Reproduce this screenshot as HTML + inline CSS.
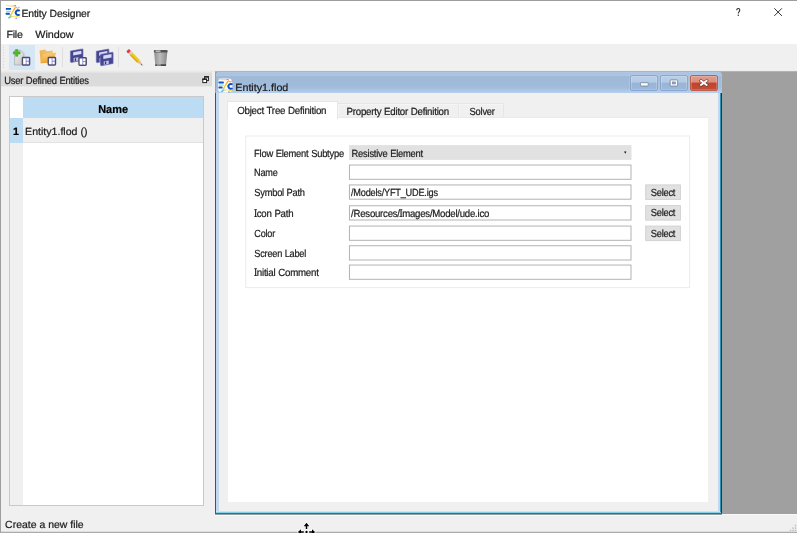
<!DOCTYPE html>
<html>
<head>
<meta charset="utf-8">
<title>Entity Designer</title>
<style>
html,body{margin:0;padding:0;}
body{width:797px;height:533px;overflow:hidden;background:#f0f0f0;font-family:"Liberation Sans",sans-serif;font-size:11px;color:#1c1c1c;position:relative;}
#win{position:absolute;left:0;top:0;width:797px;height:533px;background:#f0f0f0;overflow:hidden;will-change:transform;}
#win div,#win svg{position:absolute;box-sizing:border-box;}
.t{position:absolute;white-space:nowrap;line-height:1;transform-origin:0 0;text-rendering:geometricPrecision;-webkit-text-stroke:0.22px currentColor;}
#titlebar{left:1px;top:1px;width:796px;height:43px;background:#fff;}
#bt{left:0;top:0;width:797px;height:1px;background:#9e9e9e;}
#bl{left:0;top:0;width:1px;height:533px;background:#9e9e9e;}
#bb{left:0;top:532px;width:797px;height:1px;background:#ababab;}
#bb2{left:0;top:531px;width:797px;height:1px;background:#dedede;}
#tb{left:1px;top:44px;width:796px;height:26px;background:#f0f0f0;}
#tbhover{left:9px;top:45px;width:26px;height:25px;background:#d5e6f5;}
#tbline{left:1px;top:70px;width:796px;height:2px;background:linear-gradient(#eeeeee 0,#eeeeee 1px,#e9e9e9 1px);}
.sep{width:1px;top:47px;height:20px;background:#dfdfdf;}
#dockhead{left:1px;top:72px;width:211px;height:15px;background:linear-gradient(#e3e3e3 0,#e3e3e3 1px,#dbdbdb 1px,#dbdbdb 14px,#e7e7e7 14px);}
#table{left:9px;top:96px;width:195px;height:410px;background:#fff;border:1px solid #c9c9c9;}
#thcorner{left:10px;top:97px;width:12.5px;height:21px;background:#fff;}
#thname{left:22.5px;top:97px;width:180.5px;height:21px;background:#bbdcf3;}
#vhead{left:10px;top:118px;width:12.5px;height:387px;background:#f0f0f0;}
#vh1{left:10px;top:118px;width:12.5px;height:25px;background:#bbdcf3;}
#row1{left:22.5px;top:118px;width:180.5px;height:25px;background:#f0f0f0;border-bottom:1px solid #e2e2e2;}
#mdi{left:215px;top:71px;width:582px;height:443px;background:#a0a0a0;border-top:1px solid #b6b2b0;}
#mdiw{left:214px;top:514px;width:583px;height:1px;background:#f8f8f8;}
#sub{left:215px;top:93px;width:507px;height:421px;background:#f0f0f0;}
#subtitle{left:215.5px;top:72px;width:505px;height:21px;border-radius:2.5px 2.5px 0 0;box-shadow:0.6px 0 0 #b9e0f2;background:linear-gradient(#b3c9e4 0,#a9c3e1 1px,#a9c3e1 2.8px,#b2cae7 3.3px,#9fb9d8 4.2px,#a1bbda 15px,#b6cfed 21px);}
#fl1{left:215px;top:93px;width:1px;height:421px;background:#505050;}
#fl2{left:216px;top:93px;width:3px;height:419px;background:#c3d7ef;}
#fr1{left:718px;top:93px;width:2px;height:419px;background:#c3d7ef;}
#fr2{left:720px;top:93px;width:1px;height:421px;background:#2e93b4;}
#fr3{left:721px;top:93px;width:1px;height:421px;background:#303030;}
#fb1{left:216px;top:511px;width:504px;height:1px;background:#d6e2f0;}
#fb2{left:216px;top:512px;width:505px;height:1px;background:#80d0ee;}
#fb3{left:215px;top:513px;width:507px;height:1px;background:#1f7b8b;}
#fb4{left:215px;top:514px;width:507px;height:1px;background:#949c9e;}
#fb5{left:215px;top:515px;width:507px;height:1px;background:#fafafa;}
.wb{top:75px;width:28px;height:16px;border-radius:2px;border:1px solid #8aa6cc;box-shadow:inset 0 0 0 0.6px rgba(255,255,255,0.35),0 0 0 0.5px rgba(190,210,235,0.8);background:linear-gradient(#b8cee8 0,#b4cbe6 44%,#98b4d6 50%,#9cb8da 100%);}
#wb3{border-color:#b9604e;background:linear-gradient(#e19b8d 0,#dc8c7c 44%,#bf432b 50%,#c54d35 100%);}
#pane{left:227px;top:117px;width:482px;height:385.5px;background:#fff;border:1px solid #f0f0f0;border-top-color:#eaeaea;}
#tab1{left:227px;top:101px;width:111px;height:18px;background:#fff;border:1px solid #e6e6e6;border-bottom:none;}
#tab2{left:338px;top:103px;width:121px;height:14px;background:#f0f0f0;border:1px solid #e6e6e6;border-bottom:none;border-left:none;box-shadow:inset 1px 1px 0 #f5f5f5;}
#tab3{left:459px;top:103px;width:44.5px;height:14px;background:#f0f0f0;border:1px solid #e6e6e6;border-bottom:none;border-left:none;box-shadow:inset 1px 1px 0 #f5f5f5;}
#gbox{left:245.5px;top:135.5px;width:444.5px;height:152.5px;border:1px solid #ececec;}
#combo{left:349px;top:145px;width:282.5px;height:15px;background:#e1e1e1;}
.inp{left:349px;width:282.5px;height:15px;background:#fff;border:1px solid #adadad;}
.btn{left:645px;width:36px;height:15.5px;background:#e1e1e1;border:1px solid #d3d3d3;}
</style>
</head>
<body>
<div id="win">
  <div id="titlebar"></div>
  <div id="tb"></div>
  <div id="tbhover"></div>
  <div id="tbline"></div>
  <div class="sep" style="left:62px"></div>
  <div class="sep" style="left:118px"></div>
  <div id="dockhead"></div>
  <div id="table"></div>
  <div id="thcorner"></div>
  <div id="thname"></div>
  <div id="vhead"></div>
  <div id="vh1"></div>
  <div id="row1"></div>
  <div id="mdi"></div>
  <div id="mdiw"></div>
  <div id="sub"></div>
  <div id="subtitle"></div>
  <div id="fl1"></div><div id="fl2"></div>
  <div id="fr1"></div><div id="fr2"></div><div id="fr3"></div>
  <div id="fb1"></div><div id="fb2"></div><div id="fb3"></div><div id="fb4"></div><div id="fb5"></div>
  <div class="wb" id="wb1" style="left:630px"></div>
  <div class="wb" id="wb2" style="left:660px"></div>
  <div class="wb" id="wb3" style="left:690px"></div>
  <div id="pane"></div>
  <div id="tab2"></div>
  <div id="tab3"></div>
  <div id="tab1"></div>
<svg id="form" width="797" height="533" viewBox="0 0 797 533" style="left:0;top:0">
<rect x="245.8" y="136" width="443.8" height="151.6" fill="none" stroke="#ececec" stroke-width="1"/>
<rect x="349.1" y="145.1" width="282.4" height="14.8" fill="#e1e1e1"/>
<rect x="349.45" y="165.05" width="281.55" height="14.25" fill="#fff" stroke="#b2b2b2" stroke-width="1"/>
<rect x="349.45" y="184.95" width="281.55" height="14.25" fill="#fff" stroke="#b2b2b2" stroke-width="1"/>
<rect x="349.45" y="205.75" width="281.55" height="14.25" fill="#fff" stroke="#b2b2b2" stroke-width="1"/>
<rect x="349.45" y="226.05" width="281.55" height="14.25" fill="#fff" stroke="#b2b2b2" stroke-width="1"/>
<rect x="349.45" y="245.75" width="281.55" height="14.25" fill="#fff" stroke="#b2b2b2" stroke-width="1"/>
<rect x="349.45" y="265.05" width="281.55" height="14.25" fill="#fff" stroke="#b2b2b2" stroke-width="1"/>
<rect x="645.7" y="184.90" width="34.7" height="14.5" fill="#e1e1e1" stroke="#d2d2d2" stroke-width="1"/>
<rect x="645.7" y="205.60" width="34.7" height="14.5" fill="#e1e1e1" stroke="#d2d2d2" stroke-width="1"/>
<rect x="645.7" y="226.10" width="34.7" height="14.5" fill="#e1e1e1" stroke="#d2d2d2" stroke-width="1"/>
</svg>

<svg id="icons" width="797" height="533" viewBox="0 0 797 533" style="left:0;top:0">
<defs>
  <linearGradient id="gPage" x1="0" y1="0" x2="1" y2="1"><stop offset="0" stop-color="#f2f2f2"/><stop offset="1" stop-color="#c4c4c4"/></linearGradient>
  <linearGradient id="gFold" x1="0" y1="0" x2="0.3" y2="1"><stop offset="0" stop-color="#fbd77c"/><stop offset="1" stop-color="#eea136"/></linearGradient>
  <linearGradient id="gFoldB" x1="0" y1="0" x2="1" y2="0"><stop offset="0" stop-color="#f0b554"/><stop offset="1" stop-color="#f3c57c"/></linearGradient>
  <linearGradient id="gTrash" x1="0" y1="0" x2="1" y2="0"><stop offset="0" stop-color="#8e8e8e"/><stop offset="0.45" stop-color="#bcbcbc"/><stop offset="1" stop-color="#888"/></linearGradient>
  <linearGradient id="gDiag" x1="0" y1="0" x2="0" y2="1"><stop offset="0" stop-color="#ff9a2a"/><stop offset="0.45" stop-color="#ffd23a"/><stop offset="0.75" stop-color="#9edc8a"/><stop offset="1" stop-color="#4cc8ee"/></linearGradient>
  <linearGradient id="gTopSw" x1="0" y1="0" x2="1" y2="0"><stop offset="0" stop-color="#ffe98a"/><stop offset="0.7" stop-color="#ffc83a"/><stop offset="1" stop-color="#ff6a3a"/></linearGradient>
  <g id="formsq">
    <rect x="0.6" y="0.6" width="7.4" height="7.7" rx="0.8" fill="#8c8cd0" stroke="#4c4c5e" stroke-width="1.2"/>
    <rect x="1.5" y="1.6" width="2.5" height="5.7" fill="#fff"/>
    <rect x="4.9" y="1.6" width="2.1" height="2.3" fill="#fff"/>
    <rect x="4.9" y="5.0" width="2.1" height="2.3" fill="#fff"/>
  </g>
  <g id="floppy">
    <path d="M0.2 2.2 L12.2 0 Q12.8 0 12.8 0.7 L12.8 11.3 L1.4 13.5 Q0.2 13.6 0.2 12.6 Z" fill="#46468e" stroke="#6a6ab0" stroke-width="0.6"/>
    <path d="M3 3.4 L11.2 1.9 L11.2 5.2 L3 6.7 Z" fill="#d8d8fc"/>
    <path d="M3.4 9.2 L8.4 8.3 L8.4 11.7 L3.4 12.6 Z" fill="#c4c4f0"/>
    <path d="M4.6 9.6 L5.9 9.4 L5.9 11.8 L4.6 12 Z" fill="#2e2e6a"/>
  </g>
  <g id="appicon">
    <rect x="0.8" y="3.4" width="5.3" height="1.95" rx="0.4" fill="#0b52c2"/>
    <rect x="1" y="6.3" width="5" height="1.3" rx="0.3" fill="#86dcef"/>
    <rect x="0.8" y="8.3" width="4.1" height="1.95" rx="0.4" fill="#0b52c2"/>
    <path d="M1.4 0.8 Q5.5 2.2 10.6 1.0" fill="none" stroke="url(#gTopSw)" stroke-width="1.1" stroke-linecap="round"/>
    <path d="M10.2 1.2 Q10.8 2.6 12.2 3.9 L14.5 2.7" fill="none" stroke="#ff8a5c" stroke-width="0.9" stroke-linecap="round" stroke-linejoin="round"/>
    <path d="M10 3.4 Q7.5 7.5 4.2 13.4" fill="none" stroke="url(#gDiag)" stroke-width="1.5" stroke-linecap="round"/>
    <path d="M6 11.9 Q10 10.9 14.6 12.7" fill="none" stroke="#ffd94a" stroke-width="1.0" stroke-linecap="round"/>
    <path d="M3.4 13.3 L6.2 12.5" fill="none" stroke="#58cdef" stroke-width="1.0" stroke-linecap="round"/>
    <path d="M14.7 6.5 A2.3 2.4 0 1 0 14.7 9.9" fill="none" stroke="#0b4fc0" stroke-width="1.9"/>
    <path d="M10.4 13.8 L12.2 13.8" stroke="#1e62cc" stroke-width="0.7"/>
  </g>
</defs>
<!-- app icons -->
<use href="#appicon" x="5" y="4.5"/>
<rect x="218.1" y="78.5" width="14.1" height="14.1" rx="4" fill="#fdfdfd"/>
<use href="#appicon" x="217.7" y="78.2"/>
<!-- toolbar handle -->
<path d="M3.5 46.5 V68.5" stroke="#d6d6d6" stroke-width="1" stroke-dasharray="1.2 1.7"/>
<!-- new -->
<path d="M14.6 50.4 L20.8 50.4 L23.9 53.6 L23.9 65 L14.6 65 Z" fill="url(#gPage)" stroke="#a6a6a6" stroke-width="0.7"/>
<path d="M15.6 49.5 h2.2 v2.3 h2.3 v2.2 h-2.3 v2.3 h-2.2 v-2.3 h-2.3 v-2.2 h2.3 z" fill="#4cbc22" stroke="#36a016" stroke-width="0.5" stroke-linejoin="round"/>
<use href="#formsq" x="21.7" y="56.8"/>
<!-- open -->
<path d="M39.6 50.4 L45.2 49.6 L46.6 51.2 L52.8 50.4 L52.8 62.6 L40.6 63.3 Z" fill="url(#gFoldB)"/>
<path d="M43.2 54.2 L56.2 52.6 L53 62.6 L40.6 63.3 Z" fill="url(#gFold)"/>
<use href="#formsq" x="47.6" y="56.8"/>
<!-- save -->
<use href="#floppy" x="70.2" y="48.9"/>
<use href="#formsq" x="78.3" y="57.1"/>
<!-- save all -->
<use href="#floppy" x="96.1" y="49.1"/>
<use href="#floppy" x="100.3" y="52.2"/>
<!-- pencil -->
<g transform="translate(127.6,50.2) rotate(45.6)">
  <rect x="0" y="-1.9" width="3" height="3.8" rx="1" fill="#e23a48"/>
  <rect x="3" y="-1.9" width="2.2" height="3.8" fill="#cfcfcf"/>
  <rect x="5.2" y="-1.9" width="10.6" height="3.8" fill="#f2cc14"/>
  <rect x="5.2" y="0.3" width="10.6" height="1.6" fill="#dcae08"/>
  <path d="M15.8 -1.9 L21.4 0 L15.8 1.9 Z" fill="#e9bc92"/>
  <path d="M19.5 -0.75 L21.6 0 L19.5 0.75 Z" fill="#6a6a6a"/>
</g>
<!-- trash -->
<path d="M154 51 L167.4 51 L166 66 L155.4 66 Z" fill="url(#gTrash)"/>
<rect x="153.8" y="50" width="13.8" height="2.4" rx="1" fill="#555"/>
<rect x="155.5" y="50.6" width="5" height="1" fill="#f4f4f4"/>
<path d="M155.3 64.2 L166.1 64.2 L166 66 L155.4 66 Z" fill="#484848"/>
<rect x="156.8" y="64.6" width="4" height="0.8" fill="#e8e8e8"/>
<!-- dock float icon -->
<rect x="204.6" y="76.9" width="3.8" height="3.7" fill="#fff" stroke="#1a1a1a" stroke-width="0.95"/>
<path d="M204.1 76.9 H208.9" stroke="#1a1a1a" stroke-width="1.3"/>
<rect x="202.8" y="79.1" width="3.8" height="3.5" fill="#fff" stroke="#1a1a1a" stroke-width="0.95"/>
<path d="M202.3 79.2 H207.1" stroke="#1a1a1a" stroke-width="1.3"/>
<!-- window button glyphs -->
<rect x="640.5" y="82.7" width="7.7" height="3.3" rx="0.5" fill="#fff" stroke="#6f7f98" stroke-width="0.8"/>
<rect x="670.2" y="79.9" width="7.4" height="6.1" rx="0.5" fill="#fff" stroke="#6f7f98" stroke-width="0.8"/>
<rect x="672.2" y="81.9" width="3.4" height="2.1" fill="#86a3ca" stroke="#6f7f98" stroke-width="0.5"/>
<path d="M701 80.8 L706.6 85 M706.6 80.8 L701 85" stroke="#74352b" stroke-width="3.1" stroke-linecap="square"/>
<path d="M701 80.8 L706.6 85 M706.6 80.8 L701 85" stroke="#fff" stroke-width="1.9" stroke-linecap="square"/>
<!-- Tahoma-like serifs on capital I -->
<g fill="#141414" opacity="0.78">
<rect x="254.1" y="209.25" width="3.0" height="0.85"/><rect x="254.1" y="216.1" width="3.0" height="0.85"/>
<rect x="254.1" y="268.25" width="3.0" height="0.85"/><rect x="254.1" y="275.1" width="3.0" height="0.85"/>
<rect x="399.4" y="209.25" width="3.0" height="0.85"/><rect x="399.4" y="216.1" width="3.0" height="0.85"/>
</g>
<!-- combo arrow -->
<path d="M624.05 151.5 L626.45 151.5 L625.25 153.7 Z" fill="#111"/>
<!-- size grip -->
<g fill="#b9b9b9">
  <rect x="794.8" y="524.8" width="1.4" height="1.4"/><rect x="794.8" y="527.4" width="1.4" height="1.4"/><rect x="794.8" y="529.8" width="1.4" height="1.4"/>
  <rect x="792.3" y="527.4" width="1.4" height="1.4"/><rect x="792.3" y="529.8" width="1.4" height="1.4"/>
  <rect x="789.8" y="529.8" width="1.4" height="1.4"/>
</g>
<!-- title bar ? and X -->
<path d="M774.3 8.3 L781.9 15.9 M781.9 8.3 L774.3 15.9" stroke="#2a2a2a" stroke-width="0.95" fill="none"/>
<path d="M736.8 10.2 Q736.8 8.5 738.3 8.5 Q739.8 8.5 739.8 10.1 Q739.8 11.1 739.0 11.8 Q738.3 12.4 738.3 13.6" stroke="#2a2a2a" stroke-width="1.05" fill="none"/>
<rect x="737.7" y="14.6" width="1.2" height="1.3" fill="#2a2a2a"/>
</svg>

<span class="t" id="t_title" style="left:21px;top:10px;font-size:10.4px;letter-spacing:-0.15px;word-spacing:0.22px;transform:translateX(0.45px) scaleX(1.0013);">Entity Designer</span>
<span class="t" id="t_file" style="left:6px;top:31px;font-size:10.4px;letter-spacing:-0.25px;word-spacing:0.38px;transform:translateX(0.40px) scaleX(1.0262);">File</span>
<span class="t" id="t_window" style="left:35px;top:31px;font-size:10.4px;transform:translateX(0.21px) scaleX(1.0376);">Window</span>
<span class="t" id="t_dock" style="left:4px;top:77px;font-size:10.4px;letter-spacing:-0.25px;word-spacing:0.38px;transform:translateX(0.13px) scaleX(0.9077);">User Defined Entities</span>
<span class="t" id="t_name" style="left:98px;top:105px;font-size:11.3px;color:#000;font-weight:bold;transform:translateX(0.16px) scaleX(0.9705);">Name</span>
<span class="t" id="t_1" style="left:12px;top:127px;font-size:10.7px;color:#000;font-weight:bold;transform:translateX(0.90px) scaleX(0.9995);">1</span>
<span class="t" id="t_row" style="left:25px;top:128px;font-size:10.4px;transform:translateX(0.11px) scaleX(1.0180);">Entity1.flod ()</span>
<span class="t" id="t_sub" style="left:235px;top:84px;font-size:10.4px;transform:translateX(0.26px) scaleX(1.0320);">Entity1.flod</span>
<span class="t" id="t_tab1" style="left:237px;top:107px;font-size:10.4px;letter-spacing:-0.25px;word-spacing:0.38px;transform:translateX(0.15px) scaleX(0.9366);">Object Tree Definition</span>
<span class="t" id="t_tab2" style="left:346px;top:108px;font-size:10.4px;letter-spacing:-0.25px;word-spacing:0.38px;transform:translateX(0.54px) scaleX(0.9323);">Property Editor Definition</span>
<span class="t" id="t_tab3" style="left:469px;top:108px;font-size:10.4px;letter-spacing:-0.25px;word-spacing:0.38px;transform:translateX(0.59px) scaleX(0.8984);">Solver</span>
<span class="t" id="t_l1" style="left:254px;top:150px;font-size:10.4px;letter-spacing:-0.25px;word-spacing:0.38px;transform:translateX(0.07px) scaleX(0.9009);">Flow Element Subtype</span>
<span class="t" id="t_l2" style="left:254px;top:169px;font-size:10.4px;letter-spacing:-0.25px;word-spacing:0.38px;transform:translateX(0.10px) scaleX(0.8760);">Name</span>
<span class="t" id="t_l3" style="left:254px;top:189px;font-size:10.4px;letter-spacing:-0.25px;word-spacing:0.38px;transform:translateX(0.33px) scaleX(0.8927);">Symbol Path</span>
<span class="t" id="t_l4" style="left:254px;top:210px;font-size:10.4px;letter-spacing:-0.25px;word-spacing:0.38px;transform:translateX(0.35px) scaleX(0.9263);">Icon Path</span>
<span class="t" id="t_l5" style="left:254px;top:230px;font-size:10.4px;letter-spacing:-0.25px;word-spacing:0.38px;transform:translateX(0.34px) scaleX(0.8742);">Color</span>
<span class="t" id="t_l6" style="left:254px;top:250px;font-size:10.4px;letter-spacing:-0.25px;word-spacing:0.38px;transform:translateX(0.33px) scaleX(0.8820);">Screen Label</span>
<span class="t" id="t_l7" style="left:254px;top:269px;font-size:10.4px;letter-spacing:-0.25px;word-spacing:0.38px;transform:translateX(0.32px) scaleX(0.9348);">Initial Comment</span>
<span class="t" id="t_combo" style="left:351px;top:150px;font-size:10.4px;letter-spacing:-0.25px;word-spacing:0.38px;transform:translateX(0.60px) scaleX(0.8988);">Resistive Element</span>
<span class="t" id="t_v3" style="left:351px;top:189px;font-size:10.4px;letter-spacing:-0.25px;word-spacing:0.38px;transform:translateX(0.02px) scaleX(0.8849);">/Models/YFT_UDE.igs</span>
<span class="t" id="t_v4" style="left:351px;top:210px;font-size:10.4px;letter-spacing:-0.25px;word-spacing:0.38px;transform:translateX(0.06px) scaleX(0.9244);">/Resources/Images/Model/ude.ico</span>
<span class="t" id="t_s1" style="left:650px;top:189px;font-size:10.4px;letter-spacing:-0.25px;word-spacing:0.38px;transform:translateX(0.76px) scaleX(0.8938);">Select</span>
<span class="t" id="t_s2" style="left:650px;top:209px;font-size:10.4px;letter-spacing:-0.25px;word-spacing:0.38px;transform:translateX(0.76px) scaleX(0.8938);">Select</span>
<span class="t" id="t_s3" style="left:650px;top:230px;font-size:10.4px;letter-spacing:-0.25px;word-spacing:0.38px;transform:translateX(0.76px) scaleX(0.8938);">Select</span>
<span class="t" id="t_status" style="left:5px;top:521px;font-size:10.4px;transform:translateX(0.11px) scaleX(1.0066);">Create a new file</span>
  <div id="bb2"></div>
  <div id="bt"></div>
  <div id="bl"></div>
  <div id="bb"></div>
<svg id="cursor" width="797" height="533" viewBox="0 0 797 533" style="left:0;top:0">
<g transform="translate(306.5,532)" fill="#000" stroke="#fff" stroke-width="1.3" paint-order="stroke" stroke-linejoin="round">
  <path d="M0 -9.3 L2.8 -5.8 L0.75 -5.8 L0.75 -3.1 L-0.75 -3.1 L-0.75 -5.8 L-2.8 -5.8 Z"/>
  <path d="M-8.6 0 L-5.5 -2.8 L-5.5 -0.75 L-2.7 -0.75 L-2.7 0.75 L-5.5 0.75 L-5.5 2.8 Z"/>
  <path d="M8.6 0 L5.5 -2.8 L5.5 -0.75 L2.7 -0.75 L2.7 0.75 L5.5 0.75 L5.5 2.8 Z"/>
  <path d="M0 -1.5 L1.5 0 L0 1.5 L-1.5 0 Z"/>
</g>
</svg>

</div>
</body>
</html>
